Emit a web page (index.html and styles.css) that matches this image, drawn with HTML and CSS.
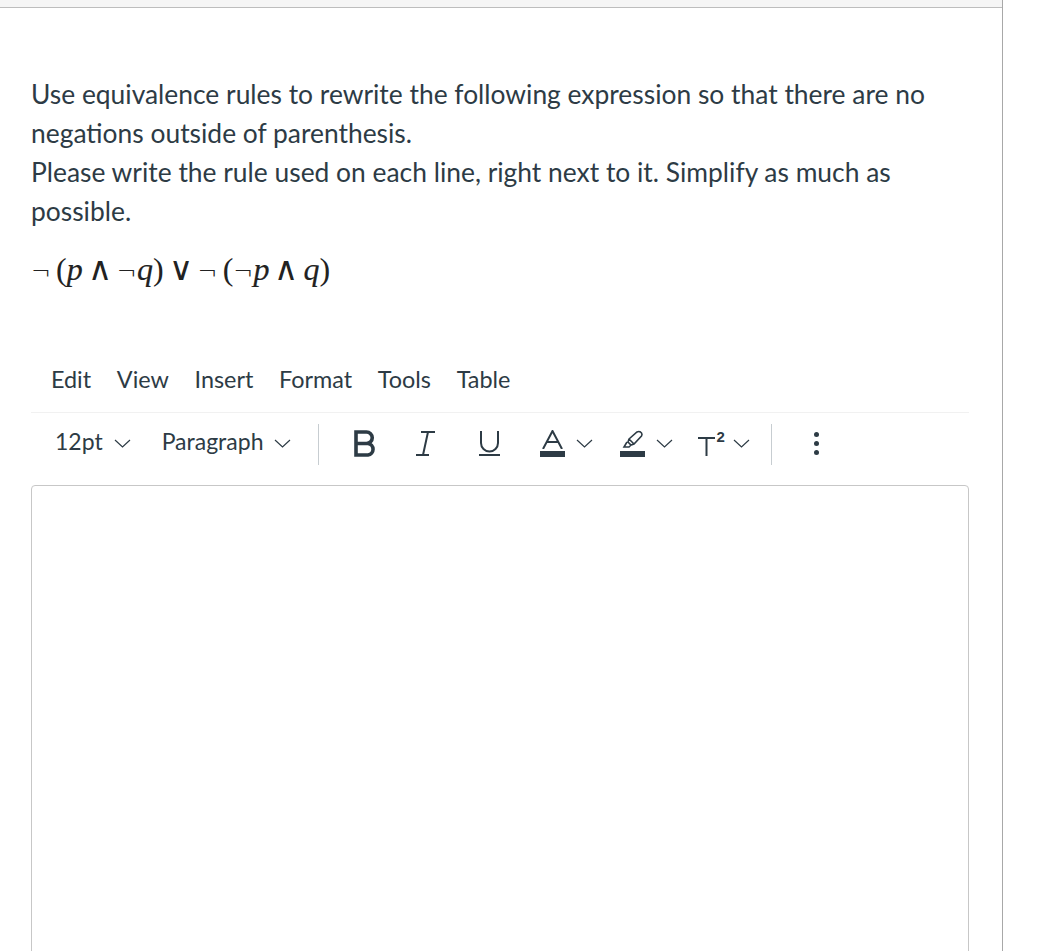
FILE: index.html
```html
<!DOCTYPE html>
<html lang="en">

<head>
    <meta charset="UTF-8">
    <meta name="viewport" content="width=device-width, initial-scale=1.0">
    <title>Quiz Question</title>
    <link rel="stylesheet" href="styles.css">
</head>

<body>
    <div class="panel">
        <div class="top-bar"></div>

        <div class="question">
            <p>Use equivalence rules to rewrite the following expression so that there are no negations outside of parenthesis.<br>Please write the rule used on each line, right next to it. Simplify as much as possible.</p>
            <p class="math"><span class="op">¬</span> (<i>p</i> <span class="op wedge">∧</span> <span class="op">¬</span><i>q</i>) <span class="op wedge">∨</span> <span class="op">¬</span> (<span class="op">¬</span><i>p</i> <span class="op wedge">∧</span> <i>q</i>)</p>
        </div>

        <div class="editor">
            <div class="menubar">
                <span>Edit</span>
                <span>View</span>
                <span>Insert</span>
                <span>Format</span>
                <span>Tools</span>
                <span>Table</span>
            </div>

            <div class="toolbar">
                <div class="tool size-select"><span>12pt</span> <svg class="chev" viewBox="0 0 17 9"><path d="M1 1l7.500 7 7.500-7"/></svg></div>
                <div class="tool para-select"><span>Paragraph</span> <svg class="chev" viewBox="0 0 17 9"><path d="M1 1l7.500 7 7.500-7"/></svg></div>
                <div class="sep"></div>

                <svg class="icon icon-b" viewBox="0 0 22 27"><path d="M2 2h10.500a5.700 5.700 0 0 1 0 11.500H2zM2 13.500h12a5.800 5.800 0 0 1 0 11.500H2z"/></svg>
                <svg class="icon icon-i" viewBox="0 0 19 25"><path d="M5 1h14M0 24h13M12 1L7 24"/></svg>
                <svg class="icon icon-u" viewBox="0 0 21 25"><path d="M2 0v12a8.500 8.500 0 0 0 17 0V0M0 24h21"/></svg>

                <div class="color-tool text-color">
                    <div class="color-icon">
                        <svg viewBox="0 0 25 19"><path d="M3 19L12.500 1 22 19M6.500 12h12"/></svg>
                        <div class="swatch"></div>
                    </div>
                    <svg class="chev" viewBox="0 0 17 9"><path d="M1 1l7.500 7 7.500-7"/></svg>
                </div>

                <div class="color-tool hl-color">
                    <div class="color-icon">
                        <svg class="pen" viewBox="0 0 25 19"><path d="M9 9L17 2q2-1 3.500 0l1 1q1 1.500 0 3L14 14l-3 1-3-3zM9 9l5 5M7 12l-3 5h5l2-2"/></svg>
                        <div class="swatch"></div>
                    </div>
                    <svg class="chev" viewBox="0 0 17 9"><path d="M1 1l7.500 7 7.500-7"/></svg>
                </div>

                <div class="tool super">
                    <div class="t-letter"><svg viewBox="0 0 17 19"><path d="M0 1h17M8.500 1v18"/></svg><sup>2</sup></div>
                    <svg class="chev" viewBox="0 0 17 9"><path d="M1 1l7.500 7 7.500-7"/></svg>
                </div>
                <div class="sep sep-right"></div>

                <div class="more"><i></i><i></i><i></i></div>
            </div>

            <div class="edit-area"></div>
        </div>
    </div>
</body>

</html>
```

FILE: styles.css
```css
body {
    margin: 0;
    height: 951px;
    overflow: hidden;
    background: #fff;
    color: #2d3b45;
    font-family: Lato, "Liberation Sans", sans-serif;
}

.panel {
    width: 1002px;
    height: 951px;
    overflow: hidden;
    border-right: 1px solid #a8a8a8;
}

.top-bar {
    height: 7px;
    background: #f5f5f5;
    border-bottom: 1px solid #bdbdbd;
}

.question {
    padding: 67px 34px 0 31px;
    font-size: 26.4px;
    line-height: 39px;
}

.question p {
    margin: 0;
}

.question .math {
    margin-top: 17px;
    height: 42px;
    font-family: "Liberation Serif", "DejaVu Serif", serif;
    font-size: 32px;
    line-height: 42px;
    word-spacing: -3px;
    color: #222;
}

.math i {
    -webkit-text-stroke: 0.2px #222;
}

.math .op {
    font-family: "DejaVu Sans", sans-serif;
    font-weight: 200;
    font-size: 24px;
}

.math .wedge {
    font-size: 33px;
}

.editor {
    margin: 71px 33px 0 31px;
    color: #2d3b45;
}

.menubar {
    display: flex;
    gap: 25.700px;
    height: 51px;
    padding-left: 20px;
    font-size: 23.400px;
    line-height: 36px;
    border-bottom: 1px solid #f1f1f1;
}

.toolbar {
    display: flex;
    align-items: center;
    height: 60px;
    padding-left: 24px;
    font-size: 23px;
}

.tool {
    display: flex;
    align-items: center;
}

.tool > span {
    margin-bottom: 4px;
}

.chev {
    width: 17px;
    height: 9px;
    margin-left: 11px;
    fill: none;
    stroke: #2d3b45;
    stroke-width: 1.2;
}

.para-select {
    margin-left: 31px;
}

.sep {
    width: 1px;
    height: 41px;
    margin-top: 2px;
    margin-left: 27px;
    background: #c7cdd1;
}

.icon {
    fill: none;
    stroke: #2d3b45;
}

.icon-b {
    width: 22px;
    height: 27px;
    margin-left: 35px;
    stroke-width: 3.6;
}

.icon-i {
    width: 19px;
    height: 25px;
    margin-left: 40px;
    stroke-width: 2;
}

.icon-u {
    width: 21px;
    height: 25px;
    margin-left: 44px;
    stroke-width: 2;
}

.color-tool {
    display: flex;
    align-items: center;
}

.text-color {
    margin-left: 40px;
}

.hl-color {
    margin-left: 27px;
}

.color-icon {
    width: 25px;
}

.color-icon svg {
    display: block;
    width: 25px;
    height: 19px;
    fill: none;
    stroke: #2d3b45;
    stroke-width: 2;
}

.color-icon .pen {
    stroke-width: 1.6;
}

.swatch {
    height: 6px;
    margin-top: 2px;
    background: #2d3b45;
}

.super {
    margin-left: 25px;
}

.t-letter {
    display: flex;
    width: 27px;
    height: 28px;
    position: relative;
}

.t-letter svg {
    width: 17px;
    height: 19px;
    margin-top: 8px;
    fill: none;
    stroke: #2d3b45;
    stroke-width: 2;
}

.t-letter sup {
    position: absolute;
    left: 18px;
    top: -1px;
    font-size: 15px;
    line-height: 18px;
    font-weight: 700;
    font-family: "Liberation Sans", sans-serif;
}

.super .chev {
    margin-left: 8px;
}

.sep-right {
    margin-left: 21px;
}

.more {
    display: flex;
    flex-direction: column;
    gap: 4px;
    margin-left: 42px;
}

.more i {
    width: 5px;
    height: 5px;
    border-radius: 50%;
    background: #2d3b45;
}

.edit-area {
    height: 600px;
    margin-top: 12px;
    border: 1px solid #c7c7c7;
    border-radius: 4px;
}
```
